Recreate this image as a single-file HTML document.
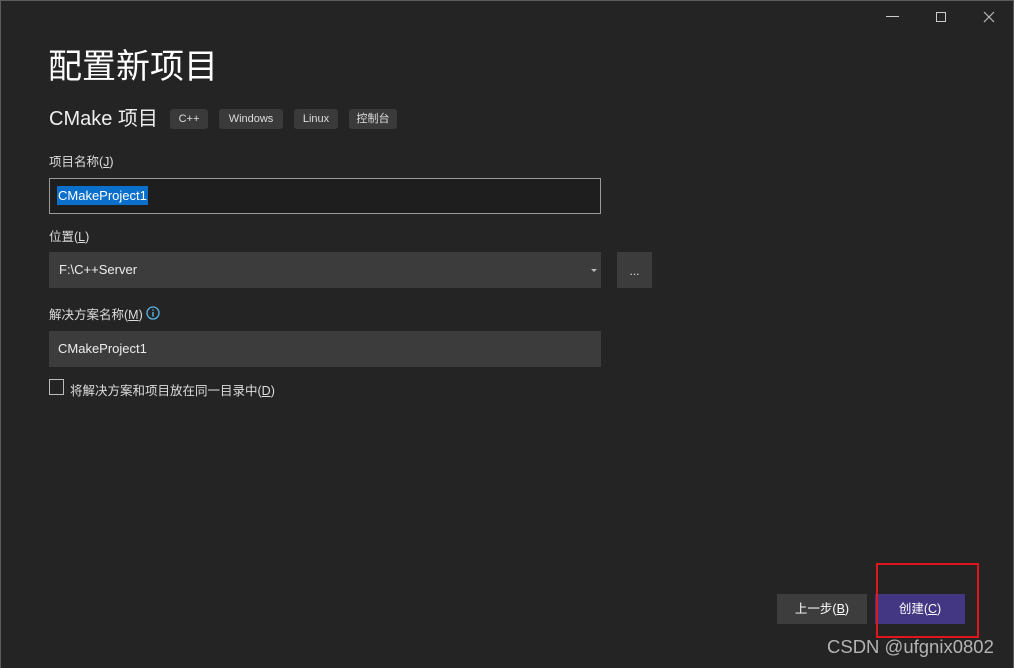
<!DOCTYPE html>
<html><head><meta charset="utf-8"><style>
*{margin:0;padding:0;box-sizing:border-box}
body{width:1014px;height:668px;background:#242424;position:relative;overflow:hidden;font-family:"Liberation Sans","Noto Sans CJK SC",sans-serif;color:#e6e6e6}
.frame{position:absolute;left:0;top:0;width:1014px;height:668px;border:1px solid #5c5c5c;border-bottom:none}
.a{position:absolute}
.tag{position:absolute;top:109px;height:20px;background:#3a3a3a;border-radius:3px;font-size:11px;line-height:20px;text-align:center;color:#ddd}
.lbl{position:absolute;left:49px;font-size:12.5px;color:#ddd}
u{text-decoration:underline}
</style></head><body>
<div class="frame"></div>
<div class="a" style="left:886px;top:16px;width:13px;height:1px;background:#ccc"></div>
<div class="a" style="left:936px;top:12px;width:10px;height:10px;border:1px solid #ccc"></div>
<svg class="a" style="left:983px;top:11px" width="12" height="12"><path d="M1 1L11 11M11 1L1 11" stroke="#bbb" stroke-width="1.2"/></svg>
<div class="a" style="left:48px;top:41px;font-size:34px;color:#fff;font-family:'Noto Sans CJK SC',sans-serif;line-height:46px">配置新项目</div>
<div class="a" style="left:49px;top:105px;font-size:20px;line-height:28px;color:#eee">CMake 项目</div>
<div class="tag" style="left:170px;width:38px">C++</div>
<div class="tag" style="left:219px;width:64px">Windows</div>
<div class="tag" style="left:294px;width:44px">Linux</div>
<div class="tag" style="left:349px;width:48px">控制台</div>
<div class="lbl" style="top:151px">项目名称(<u>J</u>)</div>
<div class="a" style="left:49px;top:178px;width:552px;height:36px;border:1px solid #9a9a9a;background:#1e1e1e"></div>
<div class="a" style="left:57px;top:186px;height:19px;background:#0b6fcc;color:#fff;font-size:13px;line-height:19px;padding:0 1px">CMakeProject1</div>
<div class="lbl" style="top:226px">位置(<u>L</u>)</div>
<div class="a" style="left:49px;top:252px;width:552px;height:36px;background:#3c3c3c;font-size:13px;line-height:36px;padding-left:10px;color:#eee">F:\C++Server</div>
<div class="a" style="left:591px;top:269px;border-left:3px solid transparent;border-right:3px solid transparent;border-top:3px solid #bbb"></div>
<div class="a" style="left:617px;top:252px;width:35px;height:36px;background:#3c3c3c;color:#ddd;font-size:12px;text-align:center;line-height:38px">...</div>
<div class="lbl" style="top:304px">解决方案名称(<u>M</u>)</div>
<svg class="a" style="left:146px;top:306px" width="14" height="14"><circle cx="7" cy="7" r="6" fill="none" stroke="#5ab4e8" stroke-width="1.3"/><rect x="6.3" y="6" width="1.4" height="4.5" fill="#5ab4e8"/><rect x="6.3" y="3.4" width="1.4" height="1.4" fill="#5ab4e8"/></svg>
<div class="a" style="left:49px;top:331px;width:552px;height:36px;background:#3c3c3c;font-size:13px;line-height:36px;padding-left:9px;color:#eee">CMakeProject1</div>
<div class="a" style="left:49px;top:379px;width:15px;height:16px;border:1px solid #bbb"></div>
<div class="a" style="left:70px;top:380px;font-size:12.5px;color:#ddd">将解决方案和项目放在同一目录中(<u>D</u>)</div>
<div class="a" style="left:777px;top:594px;width:90px;height:30px;background:#3d3d3d;font-size:12.5px;line-height:30px;text-align:center;color:#fff">上一步(<u>B</u>)</div>
<div class="a" style="left:875px;top:594px;width:90px;height:30px;background:#433682;font-size:12.5px;line-height:30px;text-align:center;color:#fff">创建(<u>C</u>)</div>
<div class="a" style="left:876px;top:563px;width:103px;height:75px;border:2px solid #e0161c"></div>
<div class="a" style="left:827px;top:636px;font-size:18.5px;color:#b4b4b4">CSDN @ufgnix0802</div>
</body></html>
